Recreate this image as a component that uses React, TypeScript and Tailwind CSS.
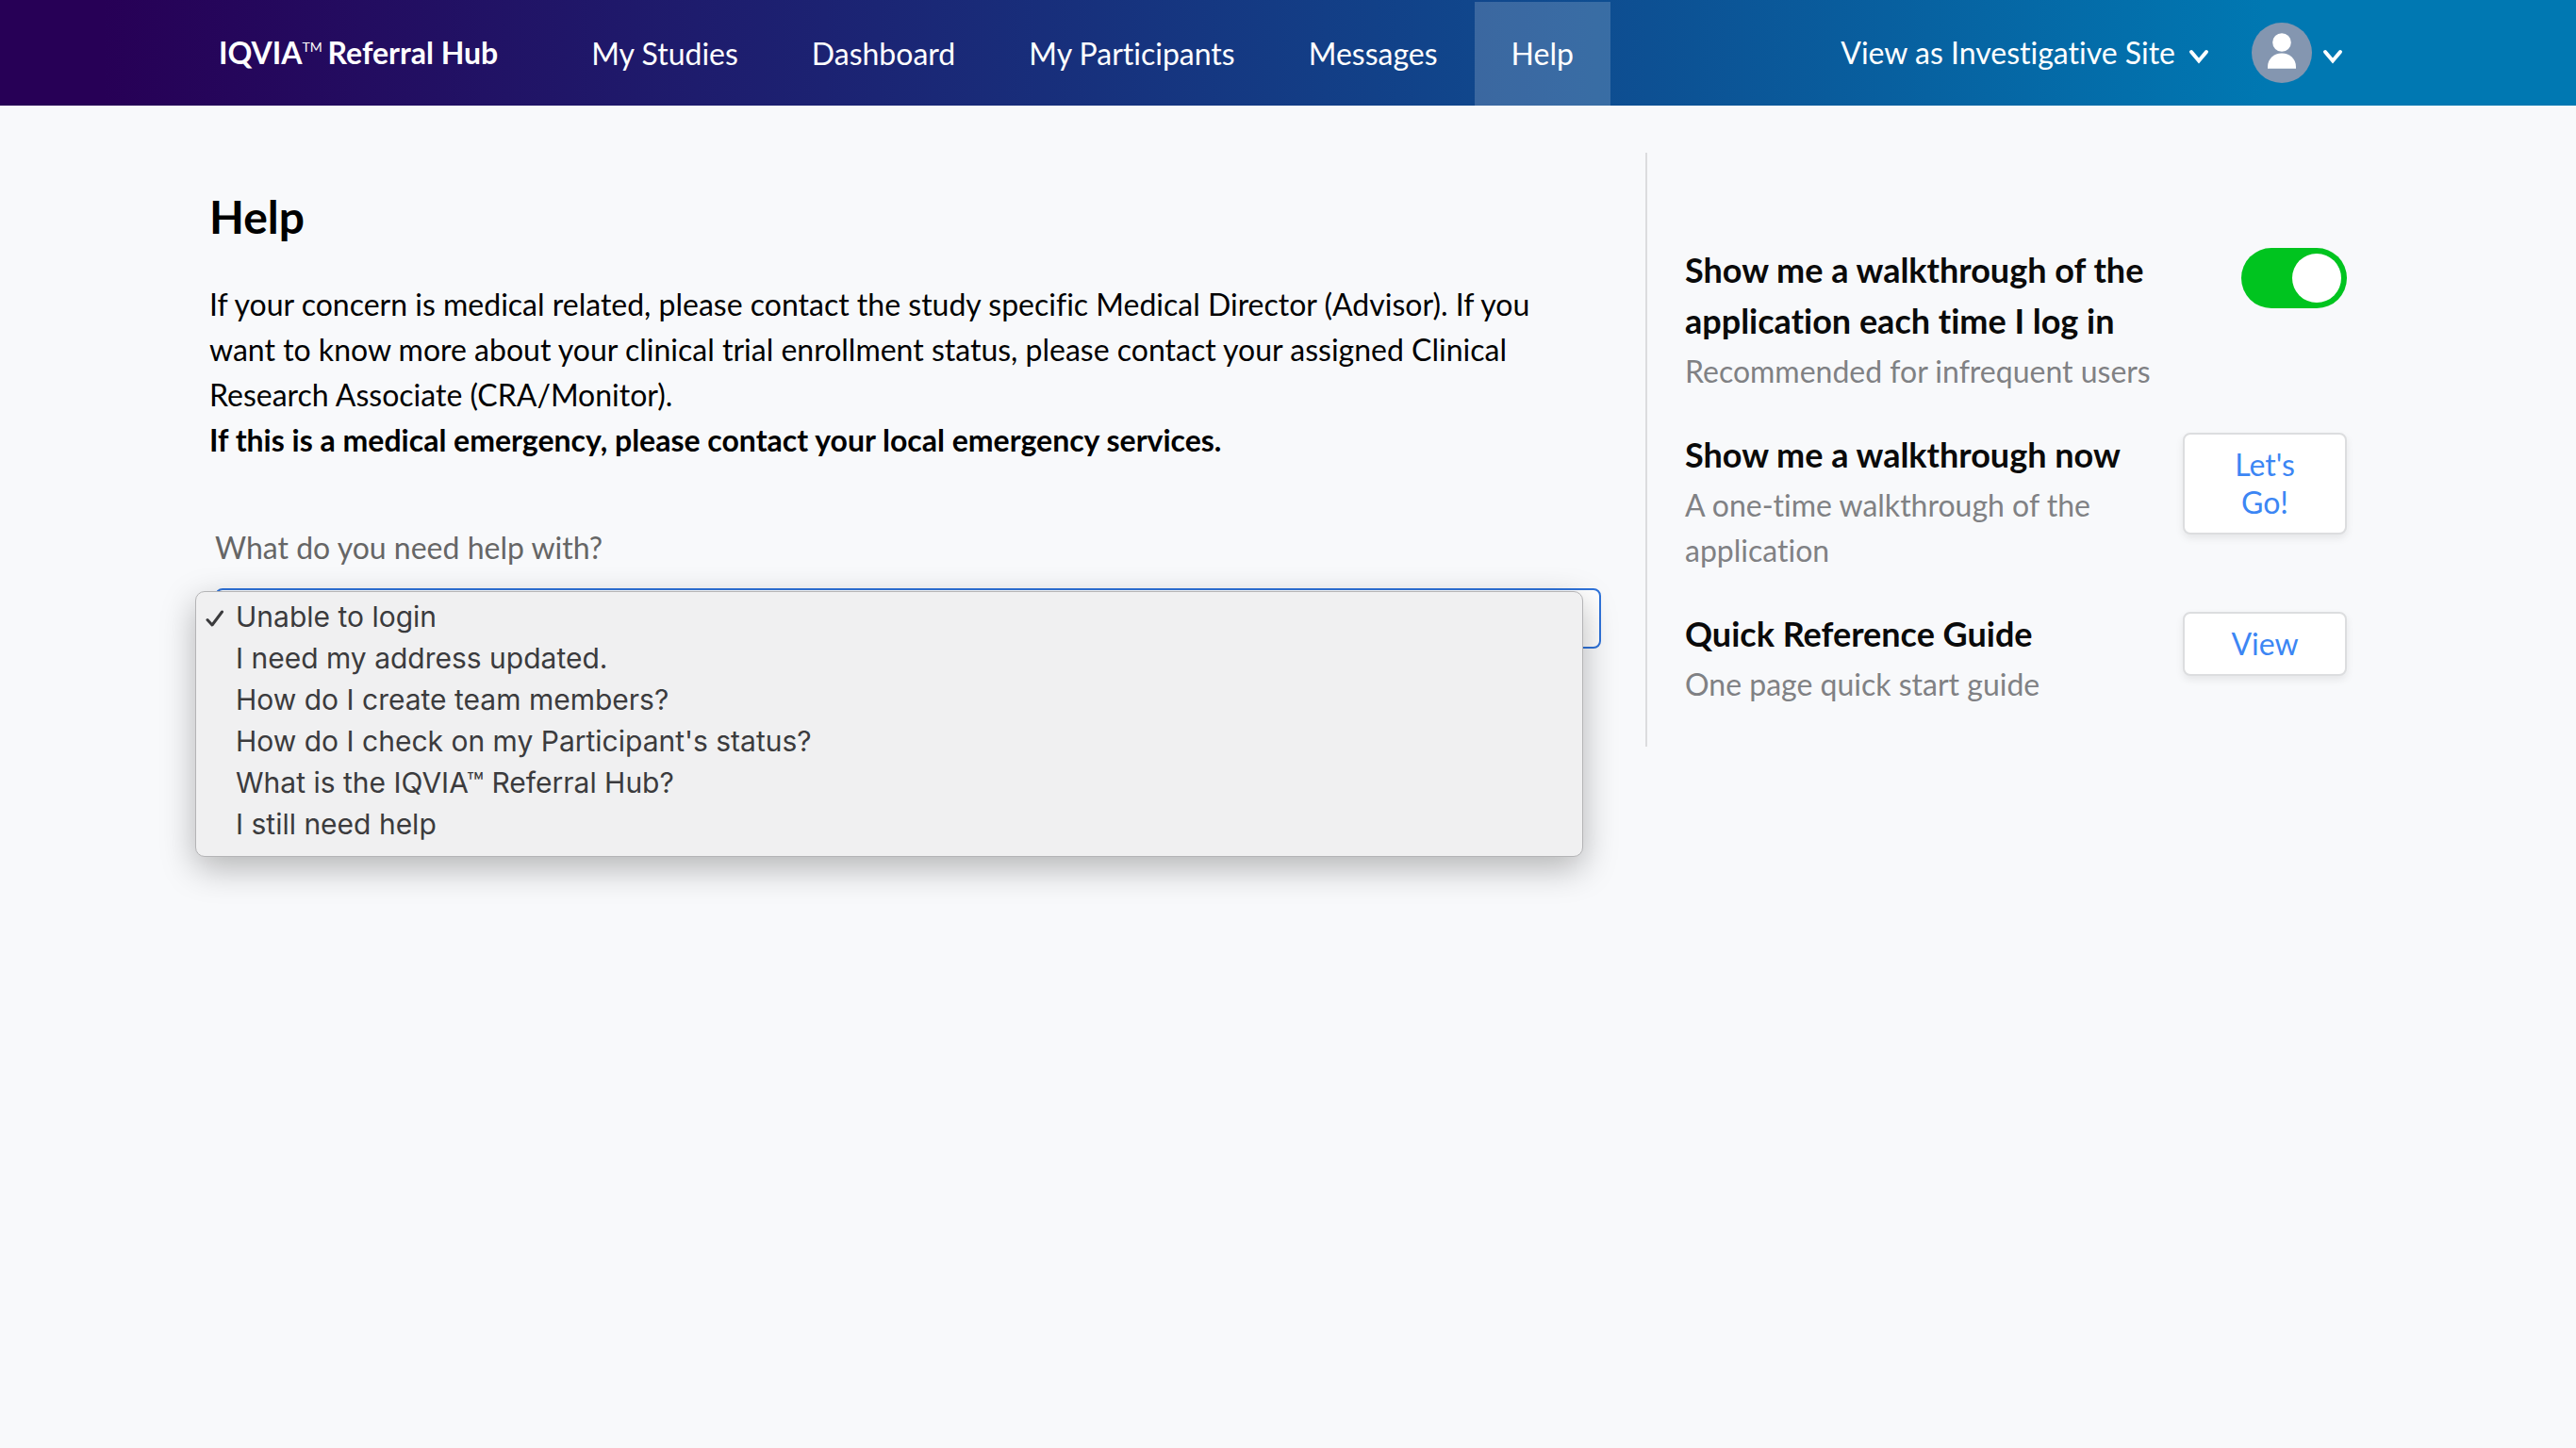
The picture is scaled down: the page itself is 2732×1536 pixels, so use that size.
import { useState } from "react";
import type { ReactNode } from "react";

const NAV = ["My Studies", "Dashboard", "My Participants", "Messages", "Help"];

const TOPICS = [
  "Unable to login",
  "I need my address updated.",
  "How do I create team members?",
  "How do I check on my Participant's status?",
  "What is the IQVIA™ Referral Hub?",
  "I still need help",
];

function Chevron() {
  return (
    <svg viewBox="0 0 22 16" className="h-4 w-[22px]" fill="none" stroke="currentColor" strokeWidth="4" strokeLinecap="round" aria-hidden="true">
      <path d="M3 3 L11 12.5 L19 3" />
    </svg>
  );
}

function Avatar() {
  return (
    <svg viewBox="0 0 64 64" className="size-16" aria-hidden="true">
      <circle cx="32" cy="32" r="32" fill="#8496b0" />
      <circle cx="32" cy="21" r="9.8" fill="#fff" />
      <path d="M17 48.7 V47 C17 38.6 23.6 32.6 32 32.6 C40.4 32.6 47 38.6 47 47 V48.7 Z" fill="#fff" />
    </svg>
  );
}

function Header() {
  return (
    <header className="flex h-28 items-center bg-[linear-gradient(90deg,#270056_4%,#1c2272_32%,#0d5093_64%,#0078b2_88%)] pr-[247px] pl-[232px] text-[32px] text-white">
      <a href="#home" className="mr-[60px] flex font-bold whitespace-pre">
        IQVIA<span className="mt-2 -mr-0.5 text-[14px] leading-5 font-normal">TM</span> Referral Hub
      </a>
      <nav className="flex self-stretch">
        {NAV.map((item) => (
          <a
            key={item}
            href={"#" + item.toLowerCase().replace(" ", "-")}
            aria-current={item === "Help" ? "page" : undefined}
            className="mt-0.5 flex items-center px-[39px] aria-[current=page]:bg-white/18"
          >
            {item}
          </a>
        ))}
      </nav>
      <div className="ml-auto flex items-center">
        <button type="button" className="flex items-center gap-3.5">
          View as Investigative Site
          <span className="pt-2"><Chevron /></span>
        </button>
        <button type="button" aria-label="Account menu" className="ml-[45px] flex items-center gap-[11px]">
          <Avatar />
          <span className="pt-2"><Chevron /></span>
        </button>
      </div>
    </header>
  );
}

function TopicPicker() {
  const [topic, setTopic] = useState(TOPICS[0]);
  return (
    <div className="mt-[66px] mr-[47px] ml-1.5">
      <label htmlFor="topic" className="block text-[32px] leading-12 text-[#666]">
        What do you need help with?
      </label>
      <div className="relative mt-[19px]">
        <select
          id="topic"
          value={topic}
          onChange={(e) => setTopic(e.target.value)}
          className="block h-16 w-full appearance-none rounded-lg border-2 border-[#2f73da] bg-white px-4 text-[32px]"
        >
          {TOPICS.map((t) => (
            <option key={t}>{t}</option>
          ))}
        </select>
        <ul
          role="listbox"
          aria-label="Help topics"
          className="absolute top-[3px] right-[19px] -left-[21px] rounded-[10px] border border-[#b4b4b6] bg-[#f0f0f1] pt-1 pb-3 font-[Inter,sans-serif] text-[30px] leading-11 text-[#3b3b3d] shadow-[0_12px_36px_rgba(0,0,0,0.28)]"
        >
          {TOPICS.map((t) => (
            <li key={t} role="option" aria-selected={t === topic} onClick={() => setTopic(t)} className="flex items-center">
              <span className="flex w-[42px] pt-1 pl-2.5">
                {t === topic && (
                  <svg viewBox="0 0 20 18" className="h-[18px] w-5" fill="none" stroke="currentColor" strokeWidth="3" strokeLinecap="round" strokeLinejoin="round" aria-hidden="true">
                    <path d="M2 10.5 L7 16 L17.5 2" />
                  </svg>
                )}
              </span>
              {t}
            </li>
          ))}
        </ul>
      </div>
    </div>
  );
}

function Row({ id, title, note, children }: { id: string; title: string; note: string; children: ReactNode }) {
  return (
    <section className="flex items-start justify-between gap-5">
      <div>
        <h2 id={id} className="text-4xl leading-[54px] font-bold text-[#0a0a0a]">{title}</h2>
        <p className="mt-[3px] text-[32px] leading-12 text-[#808184]">{note}</p>
      </div>
      {children}
    </section>
  );
}

const buttonClass =
  "mt-1 w-[174px] shrink-0 rounded-lg border-2 border-[#dcdddf] bg-white px-9 py-3 text-[32px] leading-10 text-[#3c86f4] shadow-[0_4px_8px_rgba(0,0,0,0.08)]";

export default function App() {
  const [walkthrough, setWalkthrough] = useState(true);
  return (
    <div className="min-h-screen bg-[#f8f9fb] font-[Lato,sans-serif] [font-variant-ligatures:none]">
      <Header />
      <main className="grid grid-cols-[minmax(0,1fr)_744px] items-start pt-[50px] pr-[243px] pl-[222px]">
        <div>
          <h1 className="mt-10 text-5xl leading-14 font-bold text-black">Help</h1>
          <p className="mt-[41px] mr-12 text-[32px] leading-12 text-black">
            If your concern is medical related, please contact the study specific Medical Director (Advisor). If you
            want to know more about your clinical trial enrollment status, please contact your assigned Clinical
            Research Associate (CRA/Monitor).
            <br />
            <strong className="font-bold">If this is a medical emergency, please contact your local emergency services.</strong>
          </p>
          <TopicPicker />
        </div>
        <aside className="flex flex-col gap-[37px] border-l-2 border-[#dcdcde] pt-[97px] pb-[42px] pl-10">
          <Row id="each-login" title="Show me a walkthrough of the application each time I log in" note="Recommended for infrequent users">
            <input
              type="checkbox"
              role="switch"
              aria-labelledby="each-login"
              checked={walkthrough}
              onChange={(e) => setWalkthrough(e.target.checked)}
              className="mt-1 flex h-16 w-28 shrink-0 appearance-none items-center rounded-full bg-gray-300 px-1.5 before:size-[52px] before:rounded-full before:bg-white checked:justify-end checked:bg-[#00c41f]"
            />
          </Row>
          <Row id="walkthrough-now" title="Show me a walkthrough now" note="A one-time walkthrough of the application">
            <button type="button" aria-describedby="walkthrough-now" className={buttonClass}>Let's Go!</button>
          </Row>
          <Row id="quick-guide" title="Quick Reference Guide" note="One page quick start guide">
            <button type="button" aria-describedby="quick-guide" className={buttonClass}>View</button>
          </Row>
        </aside>
      </main>
    </div>
  );
}
